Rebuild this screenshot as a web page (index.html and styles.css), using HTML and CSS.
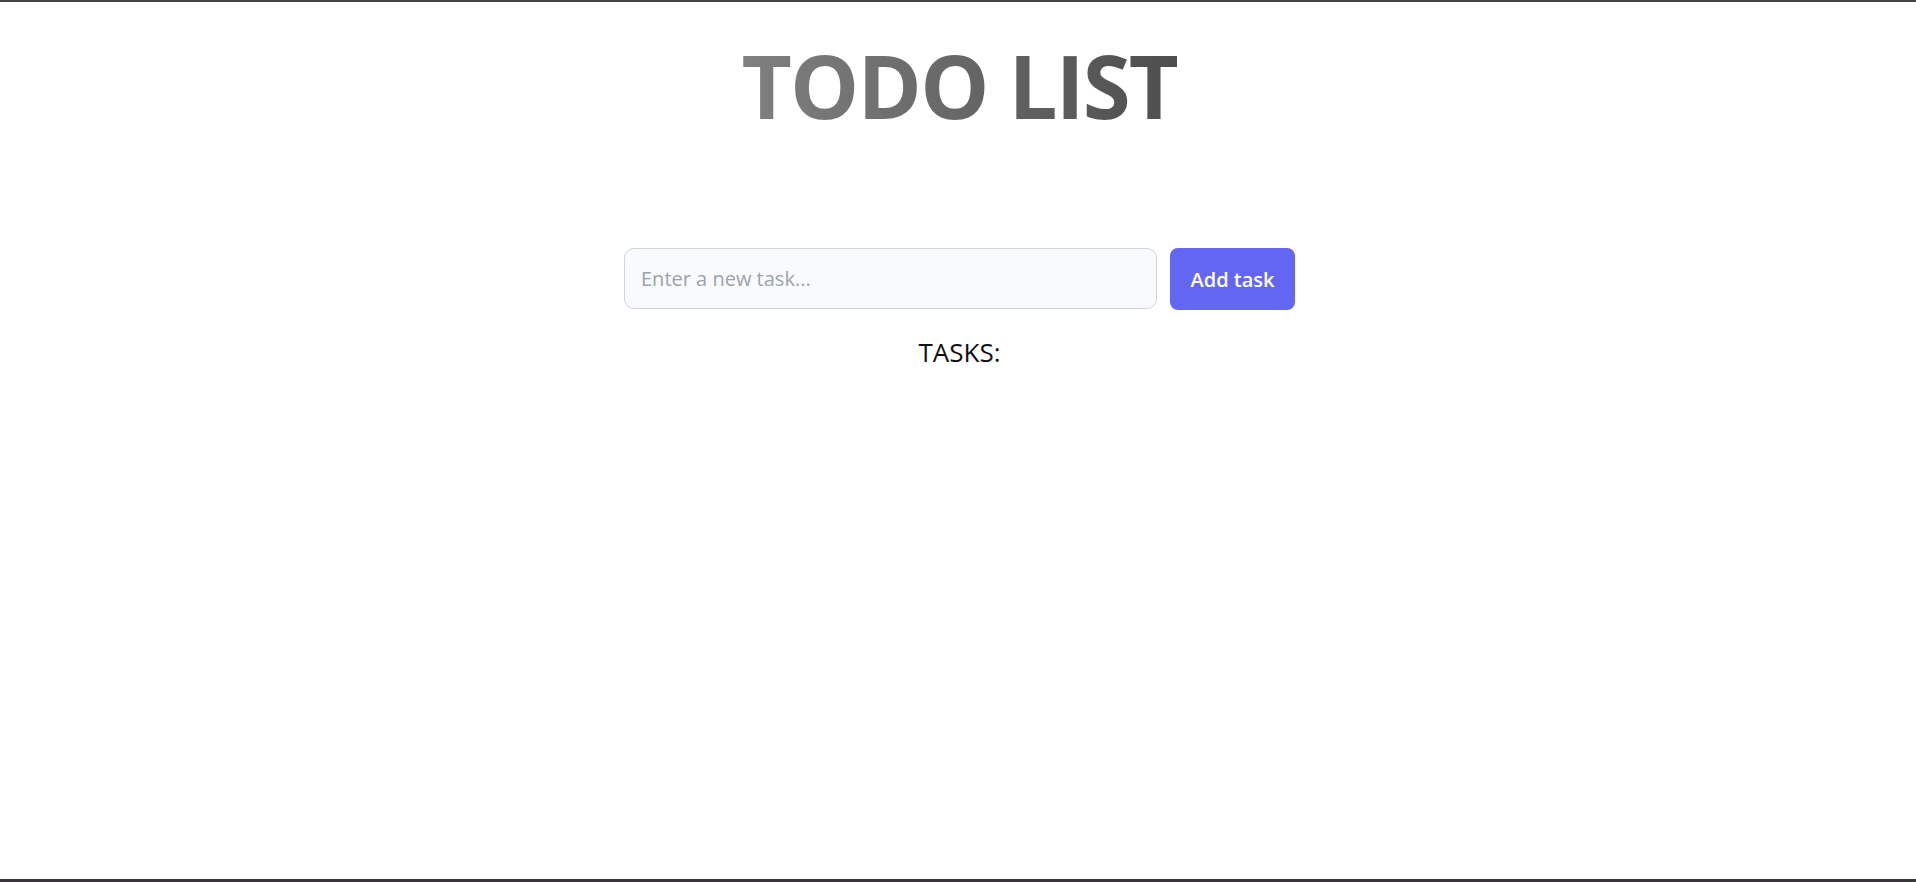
FILE: index.html
```html
<!DOCTYPE html>
<html lang="en">
<head>
<meta charset="utf-8">
<title>Todo List</title>
<link rel="stylesheet" href="styles.css">
</head>
<body>
<main class="page">
  <h1 class="title">TODO LIST</h1>
  <form class="add-form">
    <input class="task-input" type="text" placeholder="Enter a new task...">
    <button class="add-btn" type="button">Add task</button>
  </form>
  <h2 class="tasks-heading">TASKS:</h2>
</main>
</body>
</html>
```
FILE: styles.css
```css
html, body {
  margin: 0;
  padding: 0;
}
body {
  height: 882px;
  box-sizing: border-box;
  border-top: 2px solid #454345;
  border-bottom: 3px solid #38353a;
  background: #ffffff;
  font-family: "Open Sans", "Noto Sans", sans-serif;
  overflow: hidden;
}
.page {
  display: flex;
  flex-direction: column;
  align-items: center;
  padding-left: 3px;
}
.title {
  margin: 40px 0 0;
  font-size: 87px;
  line-height: 1;
  font-weight: 700;
  letter-spacing: -1.8px;
  background: linear-gradient(90deg, #808080 0%, #4e4e4e 100%);
  -webkit-background-clip: text;
  background-clip: text;
  color: transparent;
}
.add-form {
  margin-top: 119px;
  display: flex;
  gap: 13px;
}
.task-input {
  width: 533px;
  height: 61px;
  box-sizing: border-box;
  padding: 0 16px;
  border: 1px solid #d1d5db;
  border-radius: 10px;
  background: #f9fafb;
  font-family: "Open Sans", "Noto Sans", sans-serif;
  font-size: 20px;
  color: #111827;
  outline: none;
}
.task-input::placeholder {
  color: #9ca3af;
}
.add-btn {
  width: 125px;
  height: 62px;
  box-sizing: border-box;
  border: none;
  border-radius: 8px;
  background: #6366f1;
  color: #ffffff;
  font-family: "Open Sans", "Noto Sans", sans-serif;
  font-size: 20px;
  font-weight: 600;
  cursor: pointer;
}
.tasks-heading {
  margin: 27px 0 0;
  font-size: 26px;
  line-height: 1.2;
  font-weight: 500;
  color: #111111;
}
```
